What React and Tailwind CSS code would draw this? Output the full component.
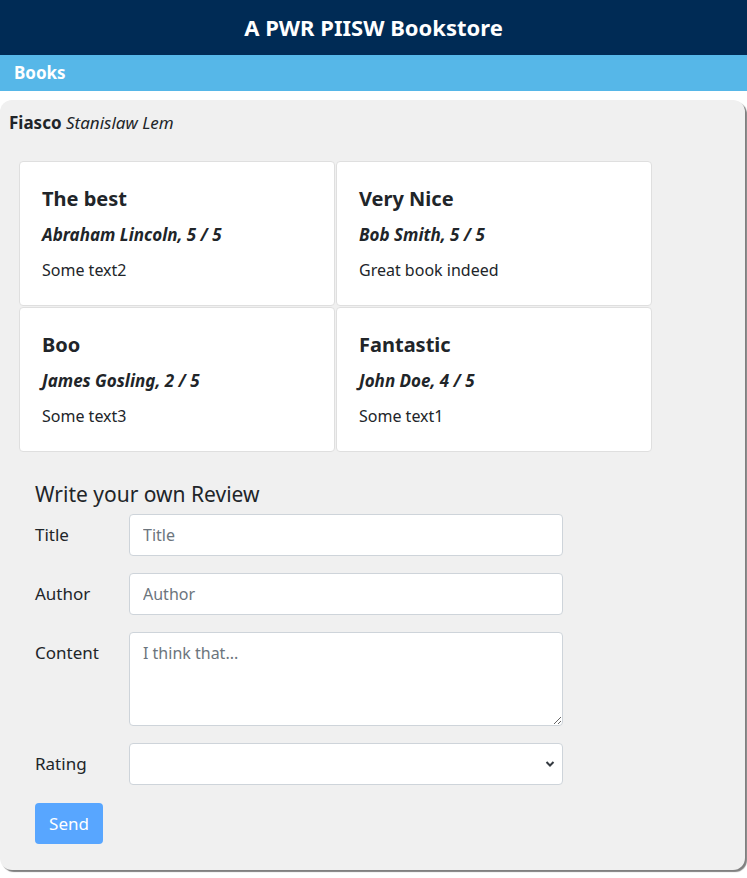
import React, { useState } from "react";

const reviews = [
  { title: "The best", author: "Abraham Lincoln", rating: 5, content: "Some text2" },
  { title: "Very Nice", author: "Bob Smith", rating: 5, content: "Great book indeed" },
  { title: "Boo", author: "James Gosling", rating: 2, content: "Some text3" },
  { title: "Fantastic", author: "John Doe", rating: 4, content: "Some text1" },
];

const ReviewCard = ({ review }) => (
  <div className="bg-white border border-[#dfdfdf] rounded-[4px] px-[22px] pt-[24px] h-[145px]">
    <h3 className="text-[20px] font-bold leading-[26px] text-[#212529]">{review.title}</h3>
    <p className="mt-[12px] text-[17px] font-bold italic leading-[22px] text-[#212529]">
      {review.author}, {review.rating} / 5
    </p>
    <p className="mt-[13px] text-[16px] leading-[22px] text-[#212529]">{review.content}</p>
  </div>
);

const inputCls =
  "w-[434px] h-[42px] bg-white border border-[#ced4da] rounded-[4px] px-[13px] text-[16px] text-[#212529] placeholder:text-[#6c757d] outline-none";

export default function App() {
  const [form, setForm] = useState({ title: "", author: "", content: "", rating: "" });
  const update = (key) => (e) => setForm({ ...form, [key]: e.target.value });

  return (
    <div className="min-h-[878px] bg-white font-['Noto_Sans',sans-serif] text-[#212529]">
      <header className="h-[55px] bg-[#002b55] flex items-center justify-center">
        <h1 className="text-[22px] font-bold text-white">A PWR PIISW Bookstore</h1>
      </header>
      <nav className="h-[36px] bg-[#56b7e8] flex items-center px-[14px]">
        <span className="text-[17px] font-bold text-white">Books</span>
      </nav>
      <main className="mt-[9px] mr-[2px] bg-[#f0f0f0] rounded-[12px] shadow-[2px_2px_1px_#808080] pb-[26px]">
        <div className="px-[9px] pt-[12px] text-[17px] leading-[22px]">
          <span className="font-bold">Fiasco</span> <span className="italic">Stanislaw Lem</span>
        </div>
        <div className="grid grid-cols-[316px_316px] gap-[1px] ml-[19px] mt-[27px]">
          {reviews.map((r) => (
            <ReviewCard key={r.title} review={r} />
          ))}
        </div>
        <form className="px-[35px] mt-[29px]" onSubmit={(e) => e.preventDefault()}>
          <h2 className="text-[21px] leading-[26px]">Write your own Review</h2>
          <div className="mt-[7px] flex flex-col gap-[17px]">
            <div className="flex items-start">
              <label className="w-[94px] pt-[8px] text-[17px]">Title</label>
              <input className={inputCls} placeholder="Title" value={form.title} onChange={update("title")} />
            </div>
            <div className="flex items-start">
              <label className="w-[94px] pt-[8px] text-[17px]">Author</label>
              <input className={inputCls} placeholder="Author" value={form.author} onChange={update("author")} />
            </div>
            <div className="flex items-start">
              <label className="w-[94px] pt-[8px] text-[17px]">Content</label>
              <textarea
                className="w-[434px] h-[94px] bg-white border border-[#ced4da] rounded-[4px] px-[13px] py-[8px] text-[16px] placeholder:text-[#6c757d] outline-none"
                placeholder="I think that..."
                value={form.content}
                onChange={update("content")}
              />
            </div>
            <div className="flex items-start">
              <label className="w-[94px] pt-[8px] text-[17px]">Rating</label>
              <div className="relative">
                <select
                  className="appearance-none w-[434px] h-[42px] bg-white border border-[#ced4da] rounded-[4px] px-[13px] text-[16px] outline-none"
                  value={form.rating}
                  onChange={update("rating")}
                >
                  <option value=""></option>
                  {[1, 2, 3, 4, 5].map((n) => (
                    <option key={n} value={n}>{n}</option>
                  ))}
                </select>
                <svg
                  className="absolute right-[8px] top-[17px] pointer-events-none"
                  width="10"
                  height="8"
                  viewBox="0 0 10 8"
                >
                  <path d="M1.5 2 L5 5.5 L8.5 2" fill="none" stroke="#343a40" strokeWidth="2" />
                </svg>
              </div>
            </div>
          </div>
          <button
            type="submit"
            className="mt-[18px] h-[41px] w-[68px] bg-[#58a6ff] rounded-[4px] text-white text-[17px]"
          >
            Send
          </button>
        </form>
      </main>
    </div>
  );
}
